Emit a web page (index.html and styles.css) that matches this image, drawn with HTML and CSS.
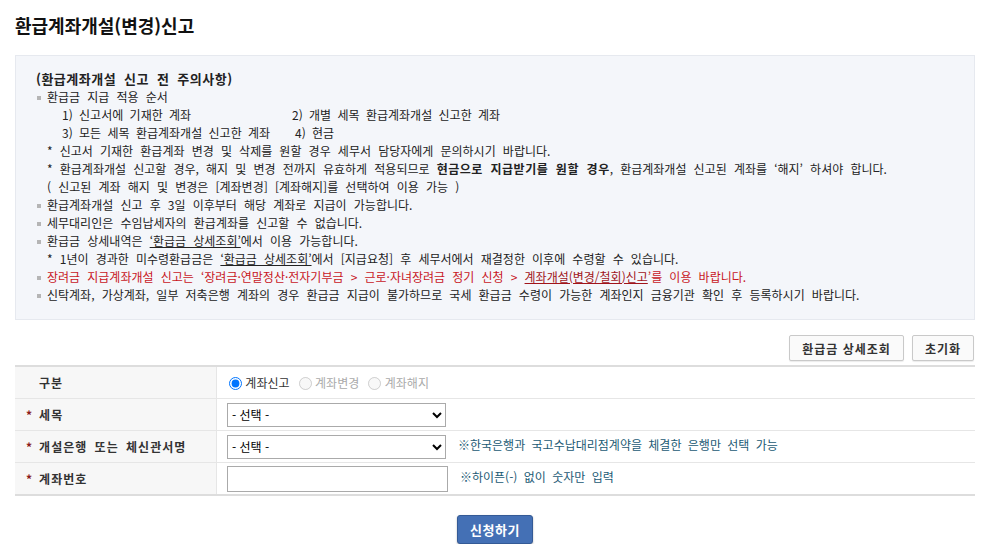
FILE: index.html
```html
<!DOCTYPE html>
<html lang="ko">
<head>
  <meta charset="UTF-8" />
  <title>환급계좌개설(변경)신고</title>
  <link rel="stylesheet" href="styles.css">
</head>
<body>
  <h2 class="page-title">환급계좌개설(변경)신고</h2>

  <div class="notice">
    <p class="notice-head">(환급계좌개설 신고 전 주의사항)</p>
    <ul class="notice-list">
      <li>환급금 지급 적용 순서
        <div class="order">
          <span class="c1">1) 신고서에 기재한 계좌</span><span>2) 개별 세목 환급계좌개설 신고한 계좌</span>
        </div>
        <div class="order">
          <span class="c1 c3">3) 모든 세목 환급계좌개설 신고한 계좌</span><span>4) 현금</span>
        </div>
        <div class="sub">* 신고서 기재한 환급계좌 변경 및 삭제를 원할 경우 세무서 담당자에게 문의하시기 바랍니다.</div>
        <div class="sub">* 환급계좌개설 신고할 경우, 해지 및 변경 전까지 유효하게 적용되므로 <b>현금으로 지급받기를 원할 경우</b>, 환급계좌개설 신고된 계좌를 ‘해지’ 하셔야 합니다.</div>
        <div class="sub">( 신고된 계좌 해지 및 변경은 [계좌변경] [계좌해지]를 선택하여 이용 가능 )</div>
      </li>
      <li>환급계좌개설 신고 후 3일 이후부터 해당 계좌로 지급이 가능합니다.</li>
      <li>세무대리인은 수임납세자의 환급계좌를 신고할 수 없습니다.</li>
      <li>환급금 상세내역은 <a href="#">‘환급금 상세조회’</a>에서 이용 가능합니다.
        <div class="sub">* 1년이 경과한 미수령환급금은 <a href="#">‘환급금 상세조회’</a>에서 [지급요청] 후 세무서에서 재결정한 이후에 수령할 수 있습니다.</div>
      </li>
      <li class="red">장려금 지급계좌개설 신고는 ‘장려금·연말정산·전자기부금 &gt; 근로·자녀장려금 정기 신청 &gt; <a href="#">계좌개설(변경/철회)신고</a>’를 이용 바랍니다.</li>
      <li>신탁계좌, 가상계좌, 일부 저축은행 계좌의 경우 환급금 지급이 불가하므로 국세 환급금 수령이 가능한 계좌인지 금융기관 확인 후 등록하시기 바랍니다.</li>
    </ul>
  </div>

  <div class="btn-row">
    <button class="btn-gray">환급금 상세조회</button>
    <button class="btn-gray">초기화</button>
  </div>

  <table class="form-table">
    <tr>
      <th class="first">구분</th>
      <td>
        <label class="radio"><input type="radio" name="kind" checked> 계좌신고</label>
        <label class="radio off"><input type="radio" name="kind" disabled> 계좌변경</label>
        <label class="radio off"><input type="radio" name="kind" disabled> 계좌해지</label>
      </td>
    </tr>
    <tr>
      <th><span class="req">*</span>세목</th>
      <td><select class="sel"><option>- 선택 -</option></select></td>
    </tr>
    <tr>
      <th><span class="req">*</span>개설은행 또는 체신관서명</th>
      <td><select class="sel"><option>- 선택 -</option></select><span class="hint">※한국은행과 국고수납대리점계약을 체결한 은행만 선택 가능</span></td>
    </tr>
    <tr>
      <th><span class="req">*</span>계좌번호</th>
      <td><input type="text" class="txt"><span class="hint">※하이픈(-) 없이 숫자만 입력</span></td>
    </tr>
  </table>

  <div class="submit-row">
    <button class="btn-blue">신청하기</button>
  </div>
</body>
</html>
```

FILE: styles.css
```css
body {
  margin: 0;
  padding: 0 17px 0 15px;
  font-family: "Noto Sans CJK KR", "Noto Sans", sans-serif;
  font-size: 12px;
  word-spacing: 3.8px;
  color: #333;
  background-color: #fff;
}
.page-title {
  margin: 0;
  padding-top: 12px;
  height: 55px;
  font-size: 18px;
  font-weight: bold;
  word-spacing: 0;
  color: #111;
  box-sizing: border-box;
}
.notice {
  background-color: #f4f6fa;
  border: 1px solid #e6e9ef;
  padding: 14px 20px 15px 20px;
  line-height: 18px;
  color: #222;
}
.notice-head {
  margin: 0;
  font-weight: bold;
  font-size: 13px;
  letter-spacing: 0.5px;
}
.notice-list {
  list-style: none;
  margin: 0;
  padding: 0;
}
.notice-list li {
  position: relative;
  padding-left: 11px;
}
.notice-list li::before {
  content: "";
  position: absolute;
  left: 1px;
  top: 8px;
  width: 4px;
  height: 4px;
  background-color: #b5b5b5;
}
.order {
  padding-left: 15px;
  word-spacing: 3px;
}
.order .c1 {
  display: inline-block;
  width: 230px;
}
.order .c3 {
  width: 233px;
}
.notice-list b {
  letter-spacing: 0.5px;
}
.notice-list .red {
  color: #c8161e;
}
.notice-list .red a {
  color: #a0141a;
}
.notice-list a {
  color: inherit;
  text-decoration: underline;
}
.btn-row {
  display: flex;
  justify-content: flex-end;
  gap: 8px;
  margin-top: 15px;
  margin-right: 1px;
}
.btn-gray {
  height: 26px;
  padding: 0 12px;
  font-family: inherit;
  font-size: 12px;
  font-weight: bold;
  letter-spacing: 1px;
  word-spacing: 0;
  color: #333;
  background-color: #fafafa;
  border: 1px solid #c9c9c9;
  border-radius: 2px;
  box-shadow: 0 1px 1px rgba(0,0,0,0.08);
}
.form-table {
  width: 100%;
  margin-top: 4px;
  border-collapse: collapse;
  border-top: 2px solid #ddd;
  border-bottom: 2px solid #ddd;
}
.form-table th {
  width: 190px;
  height: 31px;
  padding: 0 0 0 11px;
  text-align: left;
  font-weight: bold;
  font-size: 12px;
  letter-spacing: 1px;
  word-spacing: 3px;
  color: #333;
  background-color: #f7f7f7;
  border-bottom: 1px solid #e6e6e6;
  border-right: 1px solid #e6e6e6;
}
.form-table th.first {
  text-indent: 13px;
}
.form-table td {
  padding: 0 10px;
  border-bottom: 1px solid #e6e6e6;
}
.req {
  color: #8c1c1c;
  margin-right: 6px;
}
.radio {
  color: #333;
  word-spacing: 0;
}
.radio input {
  margin: 0 0 0 2px;
  vertical-align: -2px;
}
.radio.off {
  color: #aaa;
}
.sel {
  width: 219px;
  height: 24px;
  font-family: inherit;
  font-size: 12px;
  border: 1px solid #aaa;
  background-color: #fff;
  vertical-align: middle;
}
.txt {
  width: 221px;
  height: 26px;
  box-sizing: border-box;
  border: 1px solid #aaa;
  vertical-align: middle;
}
.hint {
  margin-left: 12px;
  color: #1b5a74;
  word-spacing: 3px;
}
.submit-row {
  display: flex;
  justify-content: center;
  margin-top: 19px;
}
.btn-blue {
  height: 29px;
  padding: 0 12px;
  font-family: inherit;
  font-size: 13px;
  font-weight: bold;
  letter-spacing: 0.5px;
  color: #fff;
  background-color: #4470b5;
  border: 1px solid #345a96;
  border-radius: 3px;
  box-shadow: 0 1px 2px rgba(0,0,0,0.3);
}
```
